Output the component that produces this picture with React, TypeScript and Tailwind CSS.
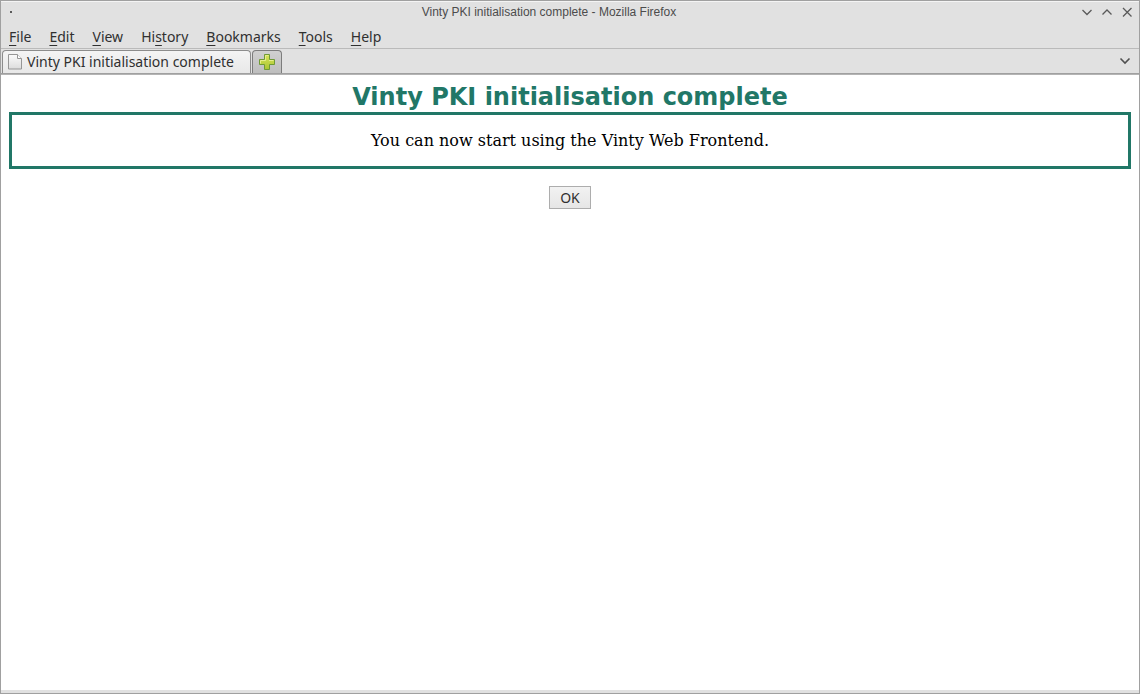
import React from "react";

const menus = [
  { before: "", key: "F", after: "ile" },
  { before: "", key: "E", after: "dit" },
  { before: "", key: "V", after: "iew" },
  { before: "Hi", key: "s", after: "tory" },
  { before: "", key: "B", after: "ookmarks" },
  { before: "", key: "T", after: "ools" },
  { before: "", key: "H", after: "elp" },
];

function TitleBar() {
  return (
    <header className="flex h-6 items-start border-t border-[#f4f4f4] pr-0.5 pl-2">
      <button type="button" aria-label="Window menu" className="flex h-5 w-3 items-center pl-px">
        <span className="size-0.5 bg-[#5a5a5a]" />
      </button>
      <span className="flex-1 text-center font-['Liberation_Sans',sans-serif] text-[12px] leading-5 text-[#4c4c4c]">
        Vinty PKI initialisation complete - Mozilla Firefox
      </span>
      <div className="flex">
        <WindowButton label="Minimize" path="M5.500 8l4.500 4.500 4.500-4.500" />
        <WindowButton label="Maximize" path="M5.500 12.500l4.500-4.500 4.500 4.500" />
        <WindowButton label="Close" path="M6 6l8.500 8.500M14.500 6l-8.500 8.500" />
      </div>
    </header>
  );
}

function WindowButton({ label, path }: { label: string; path: string }) {
  return (
    <button type="button" aria-label={label} className="size-5">
      <svg viewBox="0 0 20 20" className="size-5" fill="none" stroke="#5a5a5a" strokeWidth="1.3">
        <path d={path} />
      </svg>
    </button>
  );
}

function MenuBar() {
  return (
    <nav className="flex h-6 items-center gap-[18px] border-b border-[#bababa] px-2 text-[14px] leading-5">
      {menus.map((m) => (
        <button type="button" key={m.before + m.key + m.after}>
          {m.before}
          <span className="underline decoration-1 underline-offset-3">{m.key}</span>
          {m.after}
        </button>
      ))}
    </nav>
  );
}

function TabStrip() {
  return (
    <div className="flex h-[25px] items-end justify-between border-b border-[#a0a0a0] pt-px pr-1 pl-px">
      <div className="flex h-full items-stretch gap-px">
        <button
          type="button"
          className="flex min-w-[249px] items-center gap-1 rounded-t-[4px] border border-b-0 border-[#8c8c8c] bg-linear-to-b from-[#f4f4f4] to-[#e8e8e8] pr-2 pl-1 text-[14px] leading-5"
        >
          <svg viewBox="0 0 16 16" className="size-4">
            <defs>
              <linearGradient id="sheet" x1="0" y1="0" x2="0" y2="1">
                <stop offset="0" stopColor="#fbfbfb" />
                <stop offset="1" stopColor="#dcdcdc" />
              </linearGradient>
            </defs>
            <path d="M1.5.5h9l4 4v10.500h-13z" fill="url(#sheet)" stroke="#969696" />
            <path d="M10.500.5v4h4" fill="#fff" stroke="#969696" />
          </svg>
          Vinty PKI initialisation complete
        </button>
        <button
          type="button"
          aria-label="Open a new tab"
          className="flex w-[30px] items-center justify-center rounded-t-[4px] border border-b-0 border-[#7c7c7c] bg-linear-to-b from-[#d0d0d0] to-[#bebebe]"
        >
          <svg viewBox="0 0 16 16" className="size-4">
            <defs>
              <linearGradient id="plus" x1="0" y1="0" x2="0" y2="1">
                <stop offset="0" stopColor="#d8e45a" />
                <stop offset="1" stopColor="#a9c532" />
              </linearGradient>
            </defs>
            <path
              d="M5.500.5h5v5h5v5h-5v5h-5v-5h-5v-5h5z"
              fill="url(#plus)"
              stroke="#6f9a35"
            />
            <path d="M6.500 6.500v-5h3M1.500 9.500v-3h5M10 6.500h4.500" fill="none" stroke="#e6ee8c" />
          </svg>
        </button>
      </div>
      <button type="button" aria-label="List all tabs" className="mb-0.5 size-5">
        <svg viewBox="0 0 20 20" className="size-5" fill="none" stroke="#505050" strokeWidth="1.6">
          <path d="M5.500 7.500l4.500 4.500 4.500-4.500" />
        </svg>
      </button>
    </div>
  );
}

export default function App() {
  return (
    <div className="flex min-h-screen flex-col border border-[#a0a0a0] bg-[#e1e1e1] font-['Noto_Sans',sans-serif] text-[#303030]">
      <TitleBar />
      <MenuBar />
      <TabStrip />
      <main className="mb-[3px] flex flex-1 flex-col items-center border-t border-[#b4b4b4] bg-white p-2">
        <h1 className="font-['DejaVu_Sans',sans-serif] text-[24px] leading-[29px] font-bold text-[#217767]">
          Vinty PKI initialisation complete
        </h1>
        <section className="w-full border-3 border-[#217767] py-4 text-center font-['DejaVu_Serif',serif] text-[16px] leading-[19px] text-black">
          <p>You can now start using the Vinty Web Frontend.</p>
        </section>
        <button
          type="button"
          className="mt-[17px] h-[23px] border border-[#adadad] bg-linear-to-b from-[#f2f2f2] to-[#e6e6e6] px-[10px] text-[14px] leading-5"
        >
          OK
        </button>
      </main>
    </div>
  );
}
